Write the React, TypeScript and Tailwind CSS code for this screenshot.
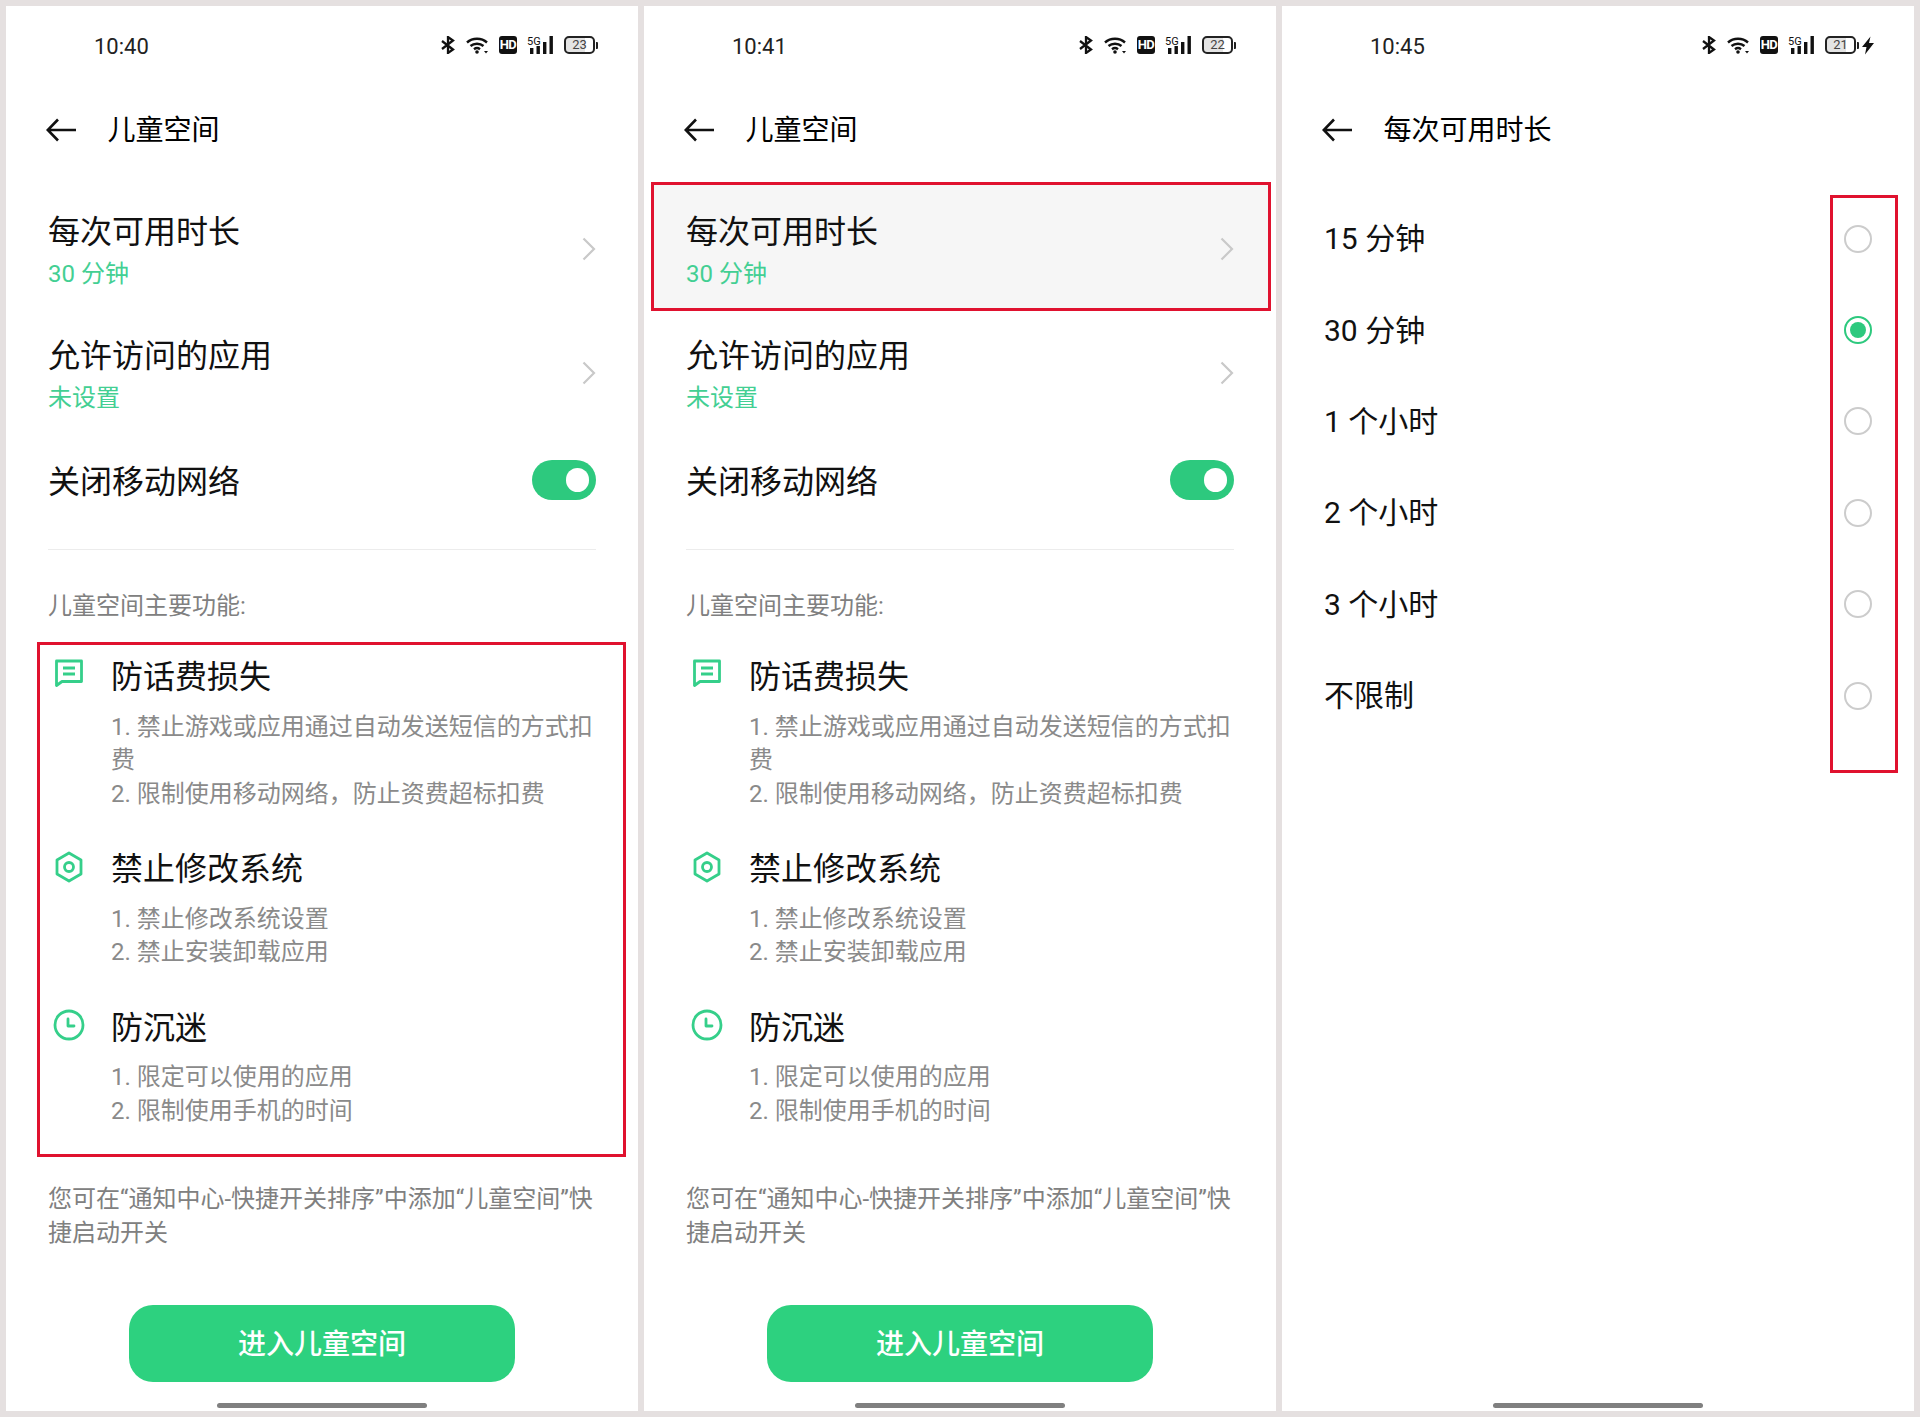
import type { ReactNode } from 'react';

const features = [
  {
    title: '防话费损失',
    icon: 'message',
    lines: ['1. 禁止游戏或应用通过自动发送短信的方式扣费', '2. 限制使用移动网络，防止资费超标扣费'],
  },
  {
    title: '禁止修改系统',
    icon: 'hex',
    lines: ['1. 禁止修改系统设置', '2. 禁止安装卸载应用'],
  },
  {
    title: '防沉迷',
    icon: 'clock',
    lines: ['1. 限定可以使用的应用', '2. 限制使用手机的时间'],
  },
];

const durations = ['15 分钟', '30 分钟', '1 个小时', '2 个小时', '3 个小时', '不限制'];

function FeatureIcon({ name }: { name: string }) {
  if (name === 'message') {
    return (
      <svg width="30" height="30" viewBox="0 0 30 30" fill="none" stroke="#35cf8a" strokeWidth="2.8" className="-translate-y-[4px]">
        <path d="M2.500 3h25v20.500H8L2.500 27.500z" strokeLinejoin="round" />
        <path d="M9 10h12M9 16h12" />
      </svg>
    );
  }
  if (name === 'hex') {
    return (
      <svg width="30" height="32" viewBox="0 0 30 32" fill="none" stroke="#35cf8a" strokeWidth="2.8" className="-translate-y-[2px]">
        <path d="M15 2l12 7v14l-12 7-12-7V9z" strokeLinejoin="round" />
        <circle cx="15" cy="16" r="4.500" />
      </svg>
    );
  }
  return (
    <svg width="32" height="32" viewBox="0 0 32 32" fill="none" stroke="#35cf8a" strokeWidth="2.8" className="-translate-y-[3px]">
      <circle cx="16" cy="16" r="14" />
      <path d="M15 10v7h6" strokeLinecap="round" strokeLinejoin="round" />
    </svg>
  );
}

function StatusBar({ time, battery, charging }: { time: string; battery: string; charging?: boolean }) {
  return (
    <div className="flex h-[78px] items-center justify-between pl-[88px] pr-[40px]">
      <span className="pt-[2px] text-[22px] text-[#222]">{time}</span>
      <div className="flex items-center">
        <svg width="14" height="18" viewBox="0 0 14 18" fill="none" stroke="#111" strokeWidth="2.300">
          <path d="M1 5l11 8.500L7 17V1l5 3.500L1 13" />
        </svg>
        <svg width="23" height="17" viewBox="0 0 23 17" fill="none" stroke="#111" strokeWidth="2.400" className="ml-[11px]">
          <path d="M1 5.500c5.500-5 14.500-5 20 0M4.500 9c3.500-3 9.500-3 13 0M8 12.200c1.700-1.300 4.300-1.300 6 0" />
          <circle cx="11" cy="15" r="1.800" fill="#111" stroke="none" />
          <path d="M18 14l2 2.500 2-2.500z" fill="#111" stroke="none" />
        </svg>
        <span className="ml-[10px] flex h-[18px] w-[18px] items-center justify-center rounded-[3px] bg-[#111] text-[13px] font-bold tracking-[-0.5px] text-white">
          HD
        </span>
        <svg width="26" height="18" viewBox="0 0 26 18" className="ml-[10px]">
          <text x="0" y="8.500" fontSize="11" fontFamily="Roboto" fill="#111">5G</text>
          <rect x="3" y="12" width="3.400" height="6" fill="#111" />
          <rect x="9.500" y="10" width="3.400" height="8" fill="#111" />
          <rect x="16" y="6" width="3.400" height="12" fill="#111" />
          <rect x="22.500" y="0" width="3.400" height="18" fill="#111" />
        </svg>
        <div className="ml-[11px] flex items-center gap-[1px]">
          <div className="flex h-[18px] w-[31px] items-center justify-center rounded-[5px] border-2 border-[#222] bg-[linear-gradient(90deg,#e4e4e4_70%,#ffffff_70%)] text-[13px] text-[#444]">
            {battery}
          </div>
          <div className="h-[7px] w-[2px] rounded-r-[1px] bg-[#222]" />
        </div>
        {charging && (
          <svg width="12" height="19" viewBox="0 0 12 18" className="ml-[3px]">
            <path d="M8.500 0L0 10.500h4.500L3 18l9-11.500H7z" fill="#111" />
          </svg>
        )}
      </div>
    </div>
  );
}

function Header({ title }: { title: string }) {
  return (
    <div className="flex h-[92px] items-center pl-[40px]">
      <svg width="30" height="24" viewBox="0 0 30 24" fill="none" stroke="#111" strokeWidth="2.600">
        <path d="M12 1.500L1.800 12 12 22.500M2 12h28" />
      </svg>
      <span className="ml-[31.500px] pt-[2px] text-[28px] leading-none text-black">{title}</span>
    </div>
  );
}

function Chevron() {
  return (
    <svg width="14" height="24" viewBox="0 0 14 24" fill="none" stroke="#c9c9c9" strokeWidth="2.200">
      <path d="M1.500 1.500L12 12 1.500 22.500" />
    </svg>
  );
}

function NavRow({ title, value }: { title: string; value: string }) {
  return (
    <div className="flex h-[124px] items-center justify-between pl-[42px] pr-[42px]">
      <div className="pt-[3.500px]">
        <div className="text-[32px] leading-[44px] text-[#111]">{title}</div>
        <div className="mt-[2.500px] text-[24px] leading-[36px] text-[#43cf93]">{value}</div>
      </div>
      <Chevron />
    </div>
  );
}

function RedBox({ className }: { className: string }) {
  return <div className={`absolute border-[3px] border-[#e0122f] ${className}`} />;
}

function Panel({ children }: { children: ReactNode }) {
  return <div className="relative flex h-[1405px] w-[632px] flex-col bg-white">{children}</div>;
}

function HomeBar() {
  return <div className="absolute bottom-[3px] left-[211px] h-[5px] w-[210px] rounded-full bg-[#808080]" />;
}

function SpaceScreen({ time, battery, children }: { time: string; battery: string; children?: ReactNode }) {
  return (
    <Panel>
      {children}
      <div className="relative flex flex-col">
        <StatusBar time={time} battery={battery} />
        <Header title="儿童空间" />
        <div className="mt-[11px]">
          <NavRow title="每次可用时长" value="30 分钟" />
          <NavRow title="允许访问的应用" value="未设置" />
        </div>
        <div className="mt-[3px] flex h-[86px] items-center justify-between px-[42px]">
          <span className="pt-[2px] text-[32px] text-[#111]">关闭移动网络</span>
          <div className="mb-[2px] flex h-[40px] w-[64px] items-center justify-end rounded-full bg-[#2dc97e] pr-[7px]">
            <div className="h-[24px] w-[23px] rounded-full bg-white" />
          </div>
        </div>
        <div className="mx-[42px] mt-[25px] h-px bg-[#ececec]" />
        <div className="mt-[39px] px-[42px] text-[24px] leading-[34px] text-[#808080]">儿童空间主要功能:</div>
        <div className="mt-[32px] flex flex-col gap-[36px] pl-[42px] pr-[42px]">
          {features.map((f) => (
            <div key={f.title} className="flex gap-[21px]">
              <div className="flex h-[44px] w-[42px] shrink-0 items-center justify-center">
                <FeatureIcon name={f.icon} />
              </div>
              <div className="min-w-0 flex-1">
                <div className="text-[32px] leading-[44px] text-[#111]">{f.title}</div>
                <div className="mt-[11.500px] text-[24px] leading-[33.500px] text-[#8a8a8a]">
                  {f.lines.map((l) => (
                    <div key={l}>{l}</div>
                  ))}
                </div>
              </div>
            </div>
          ))}
        </div>
        <div className="mt-[53.500px] px-[42px] text-[24px] leading-[34.500px] text-[#808080]">
          您可在“通知中心-快捷开关排序”中添加“儿童空间”快捷启动开关
        </div>
        <div className="mx-auto mt-[54.500px] flex h-[77px] w-[386px] items-center justify-center rounded-[24px] bg-[#2dd17f] pt-[2px] text-[28px] font-medium text-white">
          进入儿童空间
        </div>
      </div>
      <HomeBar />
    </Panel>
  );
}

export default function App() {
  return (
    <div className="flex h-[1417px] w-[1920px] gap-[6px] bg-[#e5e0e0] p-[6px] font-['Roboto','Noto_Sans_CJK_SC',sans-serif]">
      <SpaceScreen time="10:40" battery="23">
        <RedBox className="left-[31px] top-[636px] h-[515px] w-[589px]" />
      </SpaceScreen>
      <SpaceScreen time="10:41" battery="22">
        <RedBox className="left-[7px] top-[176px] h-[129px] w-[620px] bg-[#f6f6f6]" />
      </SpaceScreen>
      <Panel>
        <RedBox className="left-[548px] top-[189px] h-[578px] w-[68px]" />
        <div className="relative flex flex-col">
          <StatusBar time="10:45" battery="21" charging />
          <Header title="每次可用时长" />
          <div className="mt-[17px] flex flex-col px-[42px]">
            {durations.map((d, i) => (
              <div key={d} className="flex h-[91.400px] items-center justify-between">
                <span className="text-[30px] text-[#111]">{d}</span>
                {i === 1 ? (
                  <div className="flex h-[28px] w-[28px] items-center justify-center rounded-full border-[2.500px] border-[#2dc97e]">
                    <div className="h-[16px] w-[16px] rounded-full bg-[#2dc97e]" />
                  </div>
                ) : (
                  <div className="h-[28px] w-[28px] rounded-full border-[2.500px] border-[#cccccc]" />
                )}
              </div>
            ))}
          </div>
        </div>
        <HomeBar />
      </Panel>
    </div>
  );
}
